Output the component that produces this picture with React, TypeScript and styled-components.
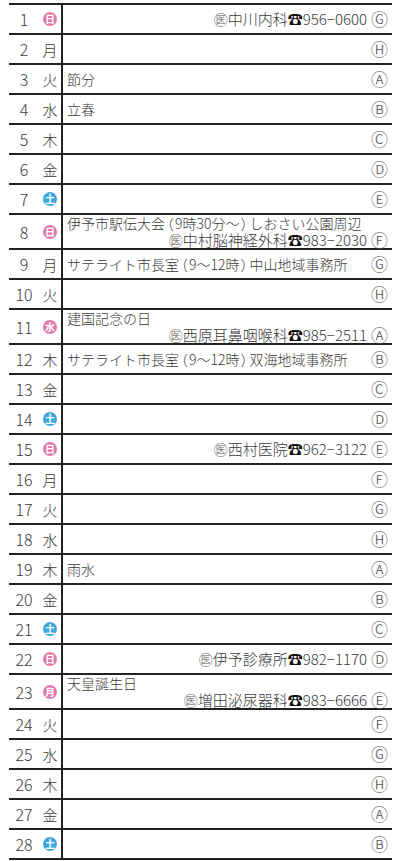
import React from 'react';
import styled, { createGlobalStyle } from 'styled-components';

const GlobalStyle = createGlobalStyle`
    body {
        margin: 0;
        background: #fff;
        font-family: "Noto Sans CJK JP", "Noto Sans", sans-serif;
        color: #333;
    }
`;

const Table = styled.div`
    margin: 3px 0 0 9px;
    width: 383px;
    border-top: 2px solid #222;
`;
const Row = styled.div<{ $tall: boolean }>`
    display: flex;
    min-height: ${(p) => (p.$tall ? 33 : 28)}px;
    border-bottom: 2px solid #222;
`;
const DateCell = styled.div`
    width: 52px;
    display: flex;
    align-items: center;
    flex-shrink: 0;
`;
const Num = styled.span`
    width: 30px;
    text-align: center;
    font-size: 16px;
    font-weight: 300;
    line-height: 1;
    color: #3a3a3a;
`;
const Week = styled.span<{ $tone?: 'sun' | 'sat' }>`
    width: 14px;
    height: 14px;
    margin-left: 4px;
    display: flex;
    align-items: center;
    justify-content: center;
    border-radius: 50%;
    background: ${(p) => (p.$tone === 'sun' ? '#e47aa9' : p.$tone === 'sat' ? '#3fa7de' : 'transparent')};
    color: ${(p) => (p.$tone ? '#fff' : '#3a3a3a')};
    font-size: ${(p) => (p.$tone ? 10 : 15)}px;
    font-weight: ${(p) => (p.$tone ? 700 : 300)};
    line-height: 1;
`;
const Content = styled.div`
    flex: 1;
    border-left: 2px solid #222;
    padding: 0 7px 0 4px;
    display: flex;
    flex-direction: column;
    justify-content: center;
    font-size: 14px;
    font-weight: 300;
    line-height: 16.5px;
    color: #3a3a3a;
`;
const Line = styled.div`
    display: flex;
    align-items: center;
`;
const Event = styled.span`
    flex: 1;
    white-space: nowrap;
`;
const Paren = styled.span`
    font-feature-settings: "palt";
    margin: 0 1.5px;
`;
const Clinic = styled.span`
    white-space: nowrap;
    margin-right: 4px;
    font-size: 15px;
`;
const Med = styled.span`
    font-size: 14px;
    color: #555;
`;
const Tel = styled.span`
    color: #111;
    font-weight: 400;
`;
const Letter = styled.span`
    width: 14px;
    text-align: center;
    font-size: 17px;
    color: #555;
`;

type Day = {
    d: number;
    w: string;
    tone?: 'sun' | 'sat';
    event?: string;
    clinic?: [string, string];
};

const days: Day[] = [
    { d: 1, w: '日', tone: 'sun', clinic: ['中川内科', '956−0600'] },
    { d: 2, w: '月' },
    { d: 3, w: '火', event: '節分' },
    { d: 4, w: '水', event: '立春' },
    { d: 5, w: '木' },
    { d: 6, w: '金' },
    { d: 7, w: '土', tone: 'sat' },
    { d: 8, w: '日', tone: 'sun', event: '伊予市駅伝大会（9時30分～）しおさい公園周辺', clinic: ['中村脳神経外科', '983−2030'] },
    { d: 9, w: '月', event: 'サテライト市長室（9～12時）中山地域事務所' },
    { d: 10, w: '火' },
    { d: 11, w: '水', tone: 'sun', event: '建国記念の日', clinic: ['西原耳鼻咽喉科', '985−2511'] },
    { d: 12, w: '木', event: 'サテライト市長室（9～12時）双海地域事務所' },
    { d: 13, w: '金' },
    { d: 14, w: '土', tone: 'sat' },
    { d: 15, w: '日', tone: 'sun', clinic: ['西村医院', '962−3122'] },
    { d: 16, w: '月' },
    { d: 17, w: '火' },
    { d: 18, w: '水' },
    { d: 19, w: '木', event: '雨水' },
    { d: 20, w: '金' },
    { d: 21, w: '土', tone: 'sat' },
    { d: 22, w: '日', tone: 'sun', clinic: ['伊予診療所', '982−1170'] },
    { d: 23, w: '月', tone: 'sun', event: '天皇誕生日', clinic: ['増田泌尿器科', '983−6666'] },
    { d: 24, w: '火' },
    { d: 25, w: '水' },
    { d: 26, w: '木' },
    { d: 27, w: '金' },
    { d: 28, w: '土', tone: 'sat' },
];

const letters = 'ⒶⒷⒸⒹⒺⒻⒼⒽ';

// full-width brackets are set proportionally, as in the printed calendar
function EventText({ text }: { text?: string }) {
    if (!text) return <Event />;
    const parts = text.split(/([（）])/);
    return (
        <Event>
            {parts.map((p, i) => (p === '（' || p === '）' ? <Paren key={i}>{p}</Paren> : p))}
        </Event>
    );
}

function ClinicText({ clinic }: { clinic?: [string, string] }) {
    if (!clinic) return null;
    return (
        <Clinic>
            <Med>㊩</Med>
            {clinic[0]}
            <Tel>☎</Tel>
            {clinic[1]}
        </Clinic>
    );
}

function App() {
    return (
        <>
            <GlobalStyle />
            <Table>
                {days.map((day) => {
                    const tall = !!(day.event && day.clinic);
                    const letter = <Letter>{letters[(day.d + 5) % 8]}</Letter>;
                    return (
                        <Row key={day.d} $tall={tall}>
                            <DateCell>
                                <Num>{day.d}</Num>
                                <Week $tone={day.tone}>{day.w}</Week>
                            </DateCell>
                            <Content>
                                {tall ? (
                                    <>
                                        <Line>
                                            <EventText text={day.event} />
                                        </Line>
                                        <Line>
                                            <Event />
                                            <ClinicText clinic={day.clinic} />
                                            {letter}
                                        </Line>
                                    </>
                                ) : (
                                    <Line>
                                        <EventText text={day.event} />
                                        <ClinicText clinic={day.clinic} />
                                        {letter}
                                    </Line>
                                )}
                            </Content>
                        </Row>
                    );
                })}
            </Table>
        </>
    );
}

export default App;
